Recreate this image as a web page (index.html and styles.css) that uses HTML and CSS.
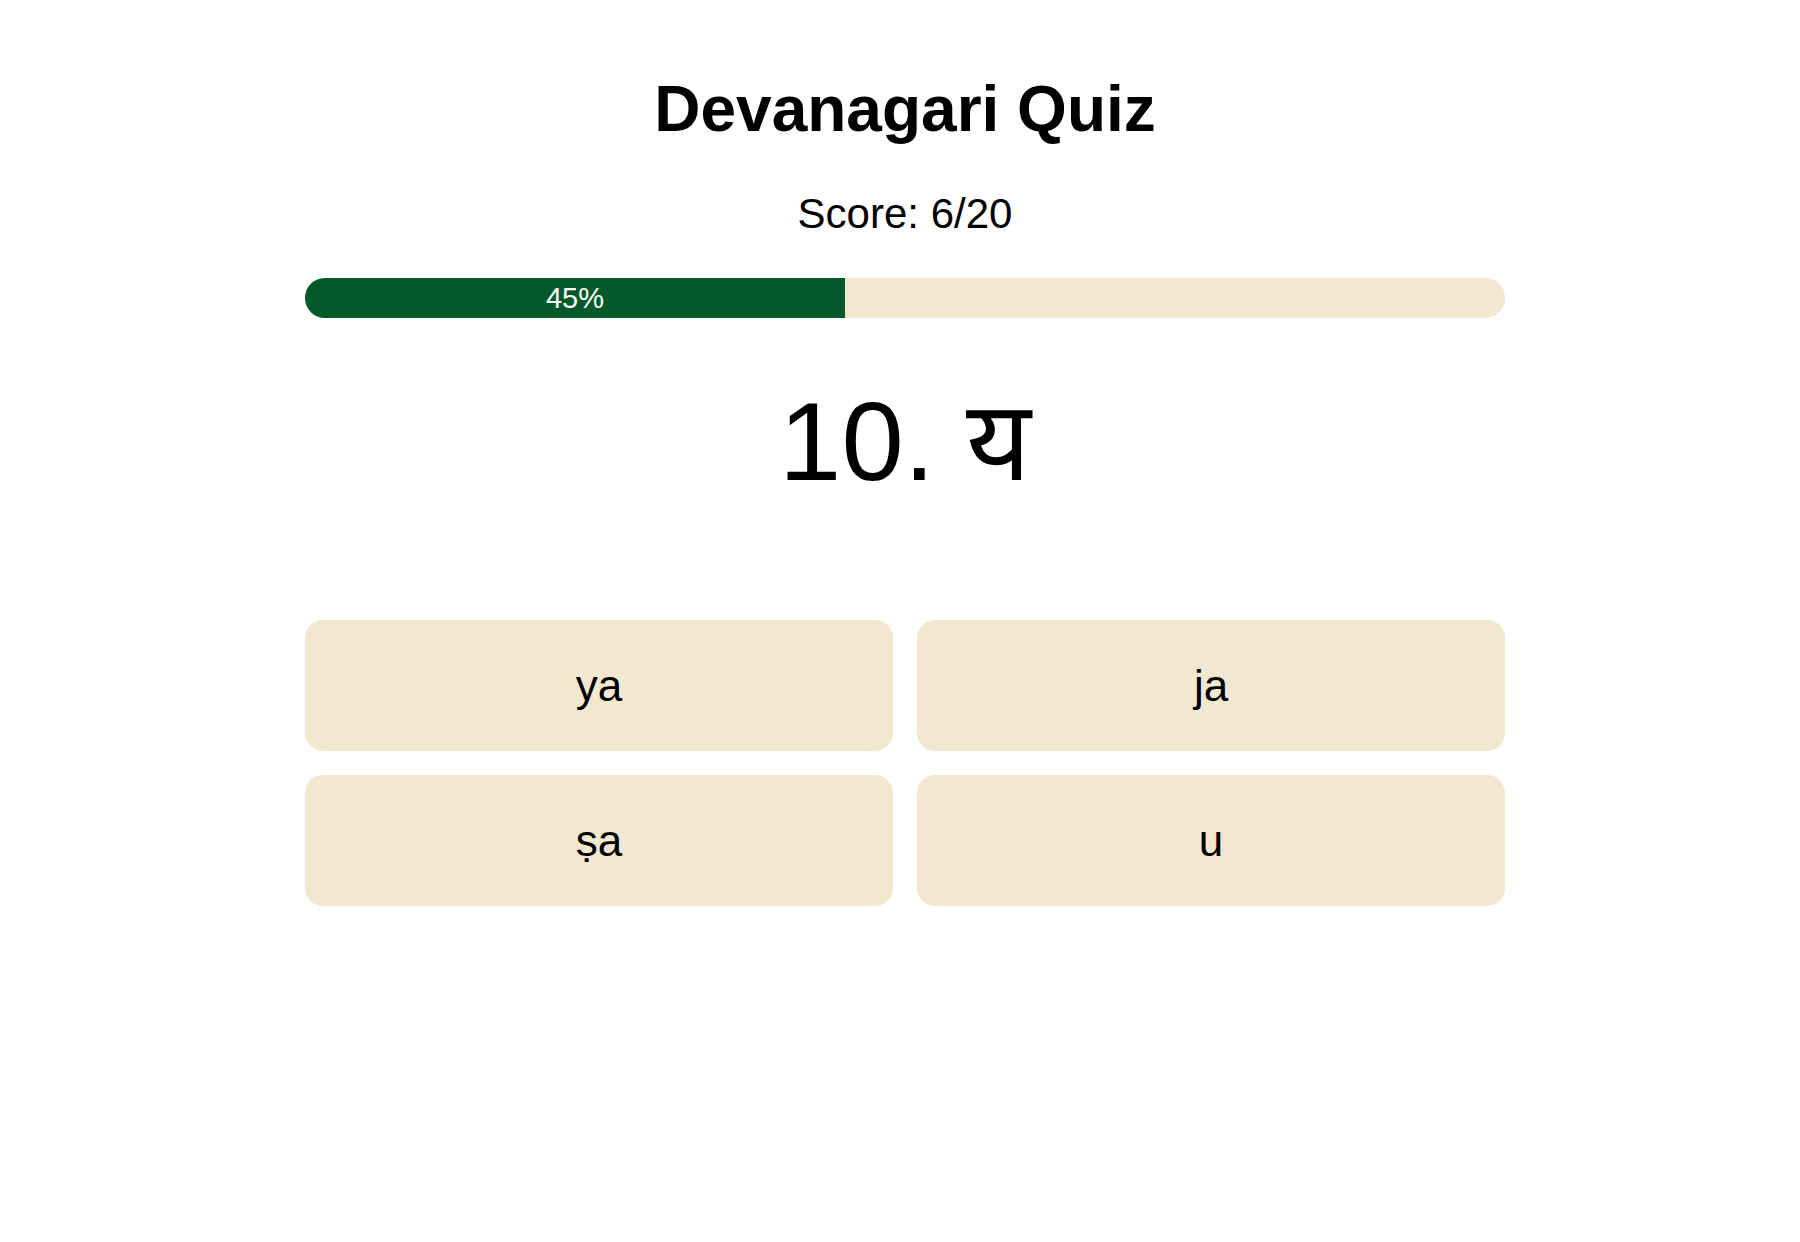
FILE: index.html
```html
<!DOCTYPE html>
<html lang="en">
<head>
<meta charset="utf-8">
<title>Devanagari Quiz</title>
<link rel="stylesheet" href="styles.css">
</head>
<body>
  <main class="quiz">
    <h1 class="quiz-title">Devanagari Quiz</h1>
    <p class="score">Score: 6/20</p>
    <div class="progress">
      <div class="progress-fill" style="width: 45%">45%</div>
    </div>
    <h2 class="question">10. य</h2>
    <div class="options">
      <button class="option" type="button">ya</button>
      <button class="option" type="button">ja</button>
      <button class="option" type="button">ṣa</button>
      <button class="option" type="button">u</button>
    </div>
  </main>
</body>
</html>
```

FILE: styles.css
```css
html, body {
  margin: 0;
  background: #ffffff;
}

body {
  padding-left: 10px;
  font-family: "Liberation Sans", Arial, sans-serif;
  color: #000000;
}

.quiz {
  width: 1200px;
  margin: 0 auto;
  padding-top: 72px;
  display: flex;
  flex-direction: column;
  align-items: stretch;
  text-align: center;
}

.quiz-title {
  margin: 0;
  font-size: 64px;
  font-weight: 700;
  line-height: 74px;
}

.score {
  margin: 44px 0 0;
  font-size: 42px;
  line-height: 48px;
}

.progress {
  margin-top: 40px;
  height: 40px;
  border-radius: 20px;
  background: #f2e8cf;
  overflow: hidden;
  display: flex;
}

.progress-fill {
  background: #025a2a;
  color: #ffffff;
  font-size: 29px;
  line-height: 40px;
  text-align: center;
}

.question {
  margin: 59px 0 0;
  font-size: 112px;
  font-weight: 400;
  line-height: 129px;
}

.options {
  margin-top: 114px;
  display: grid;
  grid-template-columns: 1fr 1fr;
  gap: 24px;
}

.option {
  height: 131px;
  border: none;
  border-radius: 18px;
  background: #f2e8cf;
  font-family: "Liberation Sans", Arial, sans-serif;
  font-size: 44px;
  color: #000000;
  cursor: pointer;
}
```
